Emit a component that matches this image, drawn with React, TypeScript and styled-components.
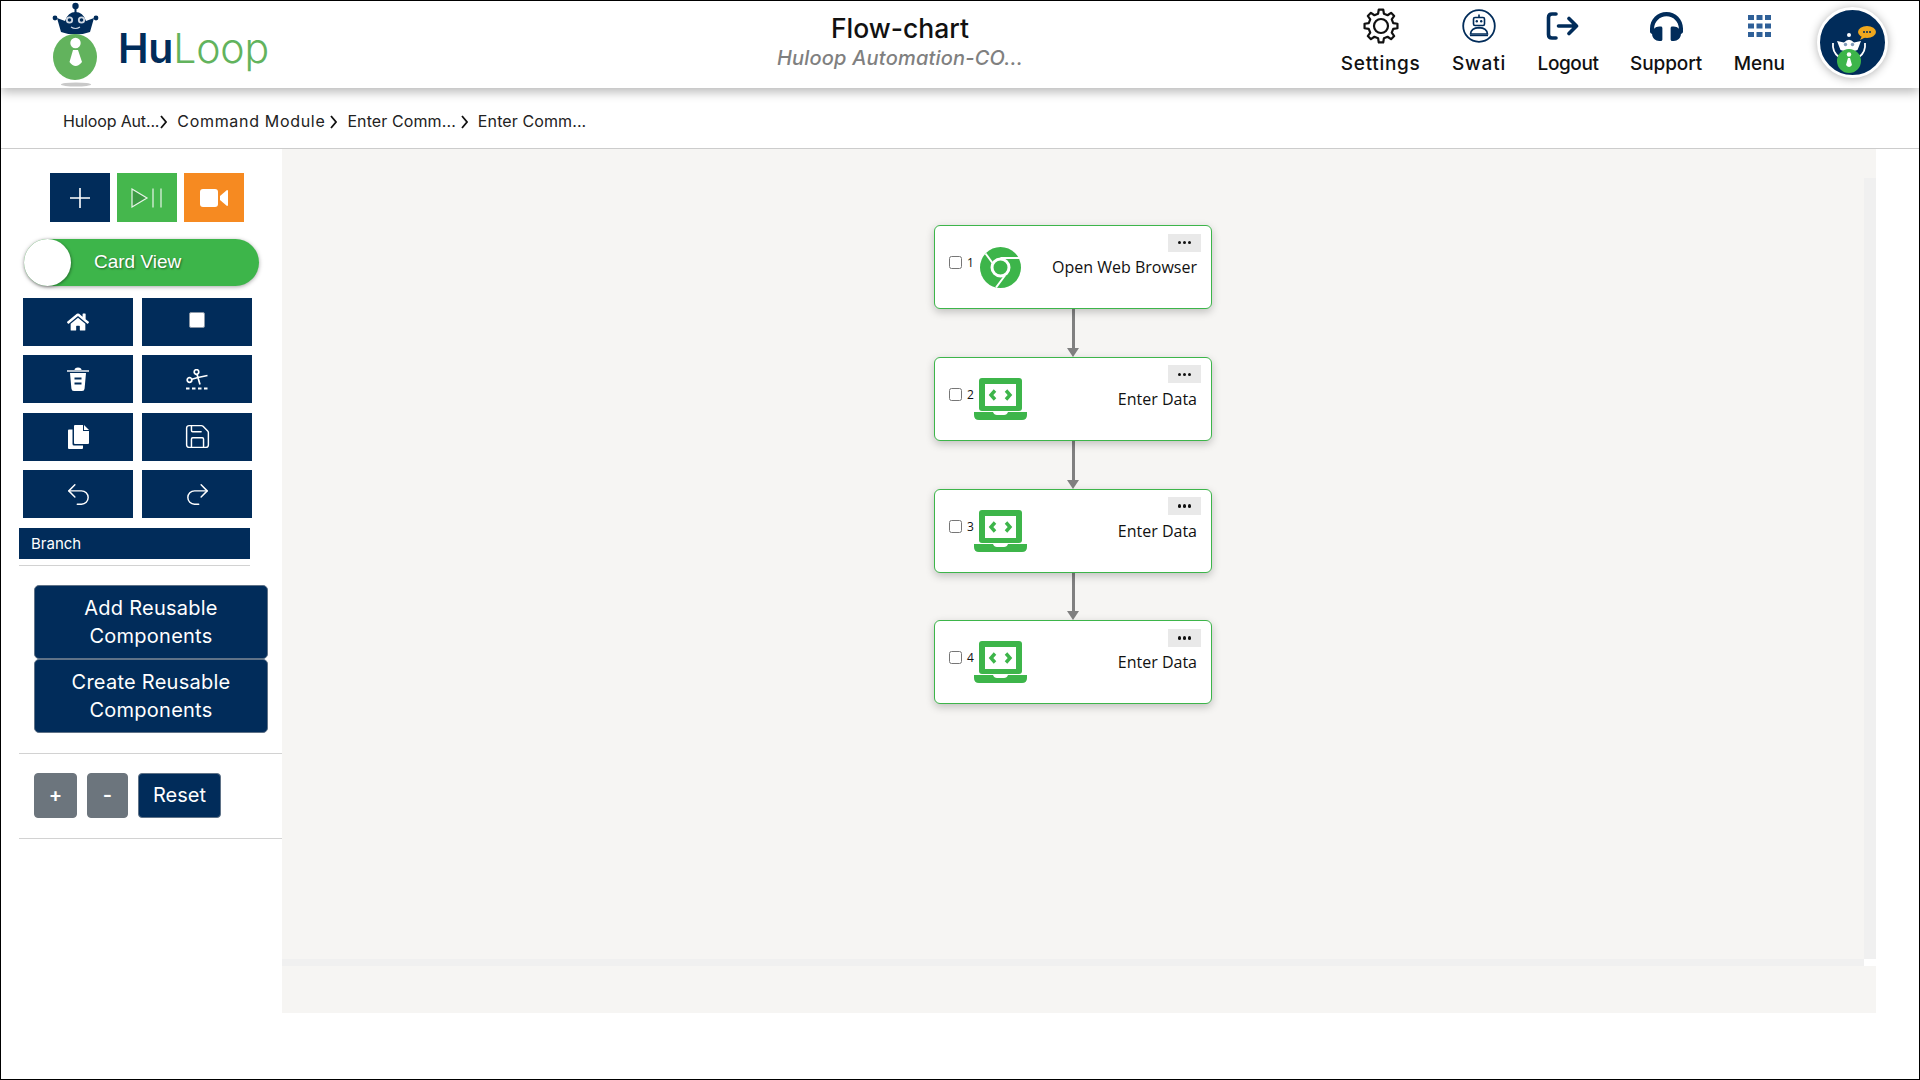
import React from "react";
import styled, { createGlobalStyle } from "styled-components";
import { FaHome, FaHeadphones } from "react-icons/fa";
import { Save, Undo2, Redo2 } from "lucide-react";

const navy = "#012c5a";
const green = "#3db54a";
const uiFont = `"Inter", "Noto Sans", sans-serif`;

const GlobalStyle = createGlobalStyle`
  html, body {
    margin: 0;
    padding: 0;
    background: #fff;
    font-family: ${uiFont};
  }
  * {
    box-sizing: border-box;
  }
`;

const Page = styled.div`
  width: 1920px;
  height: 1080px;
  border: 1px solid #000;
  background: #fff;
  display: flex;
  flex-direction: column;
  overflow: hidden;
`;

/* header */

const Header = styled.header`
  height: 87px;
  flex: none;
  display: flex;
  align-items: flex-start;
  background: #fff;
  box-shadow: 0 4px 10px rgba(0, 0, 0, 0.28);
  position: relative;
  z-index: 2;
`;

const LogoBlock = styled.div`
  width: 649px;
  height: 87px;
  display: flex;
  align-items: flex-start;
  padding-left: 45px;
`;

const LogoText = styled.div`
  margin: 21px 0 0 12px;
  font-size: 41px;
  line-height: 52px;
  letter-spacing: -0.2px;
  font-weight: 300;
  color: #62b35d;
  span {
    font-weight: 600;
    color: ${navy};
  }
`;

const TitleBlock = styled.div`
  width: 500px;
  padding-top: 11px;
  text-align: center;
`;

const Title = styled.div`
  font-size: 26.5px;
  line-height: 32px;
  font-weight: 500;
  color: #111;
`;

const SubTitle = styled.div`
  margin-top: 2px;
  font-size: 20px;
  line-height: 25px;
  font-style: italic;
  font-weight: 500;
  letter-spacing: 0.2px;
  color: #808080;
`;

const Nav = styled.nav`
  margin-left: auto;
  display: flex;
  align-items: flex-start;
  gap: 31.5px;
  padding: 8px 0 0;
`;

const NavItem = styled.div`
  display: flex;
  flex-direction: column;
  align-items: center;
`;

const NavIcon = styled.div<{ $shift?: number }>`
  height: 34px;
  margin-right: ${(p) => p.$shift ?? 0}px;
  display: flex;
  align-items: center;
  justify-content: center;
  color: ${navy};
`;

const NavLabel = styled.div<{ $spacing: number }>`
  margin-top: 9px;
  font-size: 19px;
  line-height: 24px;
  font-weight: 500;
  letter-spacing: ${(p) => p.$spacing}px;
  color: #111;
`;

const Avatar = styled.div`
  width: 71px;
  height: 71px;
  margin: 6px 31px 0 32px;
  border-radius: 50%;
  border: 3px solid #fff;
  background: ${navy};
  box-shadow: 0 1px 10px rgba(0, 0, 0, 0.3);
  display: flex;
  align-items: center;
  justify-content: center;
`;

/* breadcrumb */

const Crumbs = styled.div`
  height: 61px;
  flex: none;
  display: flex;
  align-items: center;
  padding: 6px 0 0 62px;
  border-bottom: 1px solid #ccc;
  font-size: 16px;
  color: #222;
`;

const Crumb = styled.span<{ $spacing: number }>`
  display: inline-block;
  letter-spacing: ${(p) => p.$spacing}px;
`;

const ChevronMark = styled.svg<{ $gap: number }>`
  margin: 2px 10px 0 ${(p) => p.$gap}px;
  flex: none;
`;

/* body */

const Body = styled.div`
  flex: 1;
  display: flex;
  min-height: 0;
`;

const Sidebar = styled.aside`
  width: 281px;
  flex: none;
  padding: 24px 0 0 18px;
  display: flex;
  flex-direction: column;
  align-items: flex-start;
`;

const TopTools = styled.div`
  margin-left: 31px;
  display: flex;
  gap: 7px;
`;

const TopTool = styled.div<{ $bg: string }>`
  width: 60px;
  height: 49px;
  background: ${(p) => p.$bg};
  display: flex;
  align-items: center;
  justify-content: center;
`;

const Toggle = styled.div`
  width: 235px;
  height: 47px;
  margin: 17px 0 0 5px;
  border-radius: 24px;
  background: ${green};
  box-shadow: 0 1px 4px rgba(0, 0, 0, 0.35);
  display: flex;
  align-items: center;
`;

const Knob = styled.div`
  width: 47px;
  height: 47px;
  border-radius: 50%;
  background: #fff;
  box-shadow: 1px 1px 3px rgba(0, 0, 0, 0.35);
`;

const ToggleLabel = styled.div`
  margin: 0 0 2px 23px;
  font-family: "Liberation Sans", Arial, sans-serif;
  font-size: 19px;
  color: #fff;
  text-shadow: 1px 1px 2px rgba(0, 0, 0, 0.45);
`;

const ToolGrid = styled.div`
  margin: 12px 0 0 4px;
  display: grid;
  grid-template-columns: 110px 110px;
  grid-auto-rows: 48px;
  column-gap: 9px;
  row-gap: 9.4px;
`;

const Tool = styled.div`
  background: ${navy};
  color: #fff;
  display: flex;
  align-items: center;
  justify-content: center;
`;

const StopMark = styled.span`
  width: 16px;
  height: 16px;
  margin-bottom: 4px;
  border-radius: 2px;
  background: #fff;
  border: 1px solid #8b97a6;
`;

const BranchBar = styled.div`
  width: 231px;
  height: 31px;
  margin-top: 10px;
  padding-left: 12px;
  background: ${navy};
  color: #fff;
  font-size: 15px;
  line-height: 31px;
`;

const Rule = styled.div<{ $width: number; $top: number }>`
  width: ${(p) => p.$width}px;
  height: 1px;
  margin-top: ${(p) => p.$top}px;
  background: #d2d2d2;
`;

const ReuseGroup = styled.div`
  margin: 19px 0 0 15px;
  display: flex;
  flex-direction: column;
`;

const ReuseButton = styled.div`
  width: 234px;
  height: 74px;
  padding: 8px 6px;
  border: 1px solid #5f7287;
  border-radius: 5px;
  background: ${navy};
  color: #fff;
  font-size: 20px;
  line-height: 28px;
  letter-spacing: 0.25px;
  text-align: center;
`;

const ZoomRow = styled.div`
  margin: 19px 0 0 15px;
  display: flex;
  gap: 10px;
`;

const ZoomButton = styled.div<{ $width: number; $dark?: boolean }>`
  width: ${(p) => p.$width}px;
  height: 45px;
  padding-bottom: 2px;
  border-radius: 4px;
  border: 1px solid ${(p) => (p.$dark ? "#5f7287" : "#6c757d")};
  background: ${(p) => (p.$dark ? navy : "#6c757d")};
  color: #fff;
  font-size: 20px;
  font-weight: ${(p) => (p.$dark ? 400 : 600)};
  display: flex;
  align-items: center;
  justify-content: center;
`;

/* canvas */

const Canvas = styled.main`
  width: 1594px;
  height: 864px;
  flex: none;
  display: flex;
  flex-direction: column;
  background: #f6f5f3;
`;

const ViewRow = styled.div`
  height: 810px;
  flex: none;
  display: flex;
`;

const FlowArea = styled.div`
  flex: 1;
  padding: 76px 0 0 652px;
`;

const VTrack = styled.div`
  width: 12px;
  margin-top: 29px;
  background: #f0f0f0;
`;

const HTrackRow = styled.div`
  height: 7px;
  flex: none;
  display: flex;
  background: #fff;
`;

const HTrack = styled.div`
  flex: 1;
  background: #f0f0f0;
`;

const HTrackEnd = styled.div`
  width: 12px;
`;

const Card = styled.div`
  position: relative;
  width: 278px;
  height: 84px;
  padding: 0 14px;
  border: 1.5px solid ${green};
  border-radius: 6px;
  background: #fff;
  box-shadow: 0 3px 8px rgba(0, 0, 0, 0.22);
  display: flex;
  align-items: center;
  font-family: "Open Sans", "Noto Sans", sans-serif;
`;

const CheckGroup = styled.label`
  display: flex;
  align-items: center;
  margin-bottom: 9px;
  font-size: 12px;
  color: #111;
`;

const Check = styled.input`
  width: 13px;
  height: 13px;
  margin: 0 5px 0 0;
`;

const StepNo = styled.span`
  width: 7px;
`;

const CardIcon = styled.div`
  width: 53px;
  display: flex;
  justify-content: center;
`;

const CardName = styled.div`
  margin-left: auto;
  font-size: 16px;
  color: #111;
`;

const DotsButton = styled.div`
  position: absolute;
  top: 7.5px;
  right: 10px;
  width: 33px;
  height: 18px;
  background: #e9e9e9;
  display: flex;
  align-items: center;
  justify-content: center;
  gap: 1.5px;
`;

const Dot = styled.span`
  width: 3.5px;
  height: 3.5px;
  border-radius: 50%;
  background: #111;
`;

const Connector = styled.div`
  width: 278px;
  height: 47.8px;
  display: flex;
  flex-direction: column;
  align-items: center;
`;

const ConnectorLine = styled.div`
  flex: 1;
  width: 3px;
  background: #808080;
`;

const ConnectorHead = styled.div`
  width: 0;
  height: 0;
  border-left: 6px solid transparent;
  border-right: 6px solid transparent;
  border-top: 9px solid #808080;
`;

const CanvasFoot = styled.div`
  height: 47px;
  flex: none;
`;

/* drawings */

const gearPath = () => {
  const parts: string[] = [];
  const cx = 18;
  const cy = 18;
  const teeth = 8;
  for (let i = 0; i < teeth; i++) {
    const a = (i * Math.PI * 2) / teeth - Math.PI / 2;
    const step = (Math.PI * 2) / teeth;
    const pts: [number, number][] = [
      [12.6, a - step * 0.3],
      [16.6, a - step * 0.17],
      [16.6, a + step * 0.17],
      [12.6, a + step * 0.3],
    ];
    pts.forEach(([r, t], k) => {
      const x = (cx + r * Math.cos(t)).toFixed(2);
      const y = (cy + r * Math.sin(t)).toFixed(2);
      parts.push(`${i === 0 && k === 0 ? "M" : "L"}${x} ${y}`);
    });
  }
  return parts.join(" ") + " Z";
};

const LogoMark = () => (
  <svg width="60" height="88" viewBox="46 0 60 88">
    <circle cx="75.5" cy="5" r="3.2" fill={navy} />
    <rect x="74.5" y="6" width="2" height="7" fill={navy} />
    <circle cx="55" cy="17" r="2.4" fill={navy} />
    <circle cx="96" cy="17" r="2.4" fill={navy} />
    <path d="M57 17 L65 20 Q68 11 75.5 11 Q83 11 86 20 L94 17 L90 31 Q75.5 36 61 31 Z" fill={navy} />
    <circle cx="69.5" cy="19" r="3.6" fill="#cfd8e3" />
    <circle cx="81.5" cy="19" r="3.6" fill="#cfd8e3" />
    <circle cx="69.5" cy="19" r="1.8" fill={navy} />
    <circle cx="81.5" cy="19" r="1.8" fill={navy} />
    <path d="M71 26 Q75.5 29 80 26" stroke="#cfd8e3" strokeWidth="1.2" fill="none" />
    <ellipse cx="75" cy="56" rx="22" ry="23" fill="#62b35d" />
    <circle cx="75.5" cy="42" r="5.2" fill="#fff" />
    <path d="M73 49 H78 L82 61 Q75.5 69 69.5 61 Z" fill="#fff" />
    <ellipse cx="76" cy="83.5" rx="15" ry="2" fill="#c9c9c9" />
  </svg>
);

const GearIcon = () => (
  <svg width="36" height="36" viewBox="0 0 36 36" fill="none" stroke="#111" strokeWidth="2.2" strokeLinejoin="round">
    <path d={gearPath()} />
    <circle cx="18" cy="18" r="7" />
  </svg>
);

const SwatiIcon = () => (
  <svg width="34" height="34" viewBox="0 0 34 34" fill="none" stroke={navy}>
    <circle cx="17" cy="17" r="15.8" strokeWidth="1.8" />
    <path d="M17 5.5 V8" strokeWidth="1.6" />
    <rect x="11.5" y="8.5" width="11" height="8" rx="1.5" strokeWidth="1.6" />
    <circle cx="14.8" cy="12.2" r="1.2" fill={navy} stroke="none" />
    <circle cx="19.2" cy="12.2" r="1.2" fill={navy} stroke="none" />
    <path d="M8.5 25 Q9 19 17 18.6 Q25 19 25.5 25 Z" strokeWidth="1.6" />
    <path d="M8 26.5 H26" strokeWidth="1.4" />
  </svg>
);

const LogoutIcon = () => (
  <svg width="33" height="28" viewBox="0 0 33 28" fill="none" stroke={navy} strokeWidth="3.6" strokeLinecap="round" strokeLinejoin="round">
    <path d="M10 2 H6 Q2.5 2 2.5 5.5 V22.5 Q2.5 26 6 26 H10" />
    <path d="M12.5 14 H30 M23 6.5 L30.5 14 L23 21.5" />
  </svg>
);

const MenuIcon = () => (
  <svg width="23" height="22" viewBox="0 0 23 22" fill="#2f6098">
    {[0, 8.5, 17].map((y) =>
      [0, 8.5, 17].map((x) => <rect key={`${x}-${y}`} x={x} y={y} width="6" height="5" />)
    )}
  </svg>
);

const AvatarMark = () => (
  <svg width="65" height="65" viewBox="0 0 65 65">
    <ellipse cx="47" cy="22" rx="9" ry="6" fill="#f0a81e" />
    <path d="M42 26 L40 30 L46 27 Z" fill="#f0a81e" />
    <circle cx="44" cy="22" r="1" fill={navy} />
    <circle cx="47" cy="22" r="1" fill={navy} />
    <circle cx="50" cy="22" r="1" fill={navy} />
    <circle cx="29" cy="25" r="2" fill="#fff" />
    <path d="M17 31 L24 32.5 Q29 27 34 32.5 L41 31 L37.5 40 Q29 43 20.5 40 Z" fill="#fff" />
    <circle cx="25.5" cy="34.5" r="1.7" fill="#7f9ab8" />
    <circle cx="32.5" cy="34.5" r="1.7" fill="#7f9ab8" />
    <path d="M13 33 Q12 42 19 47 M45 33 Q46 42 39 47" stroke="#fff" strokeWidth="1.8" fill="none" />
    <circle cx="29" cy="51" r="12" fill={green} />
    <circle cx="29" cy="44.5" r="2.2" fill="#fff" />
    <path d="M28 48 H30 L32 55 Q29 59 26 55 Z" fill="#fff" />
  </svg>
);

const Chevron = ({ gap }: { gap: number }) => (
  <ChevronMark $gap={gap} width="7" height="14" viewBox="0 0 7 14" fill="none" stroke="#111" strokeWidth="1.8">
    <path d="M1 1 L6 7 L1 13" />
  </ChevronMark>
);

const PlayPauseIcon = () => (
  <svg width="32" height="20" viewBox="0 0 32 20" stroke="#e8f5e9" strokeWidth="1.2">
    <path d="M1 1 L16 10 L1 19 Z" fill="#3d9a45" />
    <path d="M22 0.5 V19.5 M30 0.5 V19.5" fill="none" />
  </svg>
);

const PlusIcon = () => (
  <svg width="20" height="20" viewBox="0 0 20 20" stroke="#fff" strokeWidth="1.6">
    <path d="M10 0 V20 M0 10 H20" />
  </svg>
);

const VideoIcon = () => (
  <svg width="28" height="18" viewBox="0 0 28 18" fill="#fff">
    <rect x="0" y="0" width="18" height="18" rx="3" />
    <path d="M20 7 L27 1 Q28 1 28 2 V16 Q28 17 27 17 L20 11 Z" />
  </svg>
);

const TrashIcon = () => (
  <svg width="22" height="24" viewBox="0 0 22 24">
    <path d="M7.5 3 Q7.5 0.5 11 0.5 Q14.5 0.5 14.5 3 Z" fill="#fff" />
    <path d="M0 4 H22" stroke="#fff" strokeWidth="1.4" />
    <path d="M3 6 H19 L17.6 21.5 Q17.4 24 15 24 H7 Q4.6 24 4.4 21.5 Z" fill="#fff" />
    <path d="M7.5 11.5 H14.5 M7.5 16.5 H14.5" stroke={navy} strokeWidth="2" />
  </svg>
);

const CutIcon = () => (
  <svg width="23" height="21" viewBox="0 0 23 21" fill="none" stroke="#fff" strokeWidth="1.7">
    <circle cx="10.5" cy="3" r="2.3" />
    <circle cx="3.5" cy="11" r="2.3" />
    <path d="M5.8 10.2 L12 8.5 L21.5 6.5 M11 5.2 L14 15.5" />
    <path d="M0 19.5 H22" strokeWidth="1.8" strokeDasharray="3.5 2.5" />
  </svg>
);

const CopyIcon = () => (
  <svg width="21" height="24" viewBox="0 0 21 24" fill="#fff">
    <path d="M7 0 H15 V6 H21 V18 Q21 19 20 19 H7 Q6 19 6 18 V1 Q6 0 7 0 Z" />
    <path d="M16 0 L21 5 H16 Z" />
    <path d="M0 5.5 Q0 4.5 1 4.5 H4.5 V19 Q4.5 20.5 6 20.5 H15 V23 Q15 24 14 24 H1 Q0 24 0 23 Z" />
  </svg>
);

const ChromeIcon = () => (
  <svg width="41" height="41" viewBox="0 0 41 41">
    <circle cx="20.5" cy="20.5" r="20.5" fill={green} />
    <circle cx="20.5" cy="20.5" r="8.5" fill="none" stroke="#fff" strokeWidth="3" />
    <path d="M20.5 11 H39.5 M12.5 16 L5.5 6.5 M25 28.5 L16 40.5" stroke="#fff" strokeWidth="2" fill="none" />
  </svg>
);

const LaptopIcon = () => (
  <svg width="53" height="42" viewBox="0 0 53 42">
    <rect x="5" y="0" width="43" height="33" rx="3" fill={green} />
    <rect x="11" y="6" width="31" height="22" fill="#fff" />
    <path d="M21 12.5 L17 17 L21 21.5 M32 12.5 L36 17 L32 21.5" fill="none" stroke={green} strokeWidth="3.4" />
    <path d="M0 34 H19 Q20 37 23 37 H30 Q33 37 34 34 H53 V37 Q53 42 48 42 H5 Q0 42 0 37 Z" fill={green} />
  </svg>
);

const steps = [
  { no: 1, name: "Open Web Browser", icon: <ChromeIcon /> },
  { no: 2, name: "Enter Data", icon: <LaptopIcon /> },
  { no: 3, name: "Enter Data", icon: <LaptopIcon /> },
  { no: 4, name: "Enter Data", icon: <LaptopIcon /> },
];

const navItems = [
  { label: "Settings", spacing: 0.7, icon: <GearIcon /> },
  { label: "Swati", spacing: 0.8, icon: <SwatiIcon /> },
  { label: "Logout", spacing: -0.4, icon: <LogoutIcon />, shift: 12 },
  { label: "Support", spacing: -0.1, icon: <FaHeadphones size={33} color={navy} /> },
  { label: "Menu", spacing: 0, icon: <MenuIcon /> },
];

const crumbs = [
  { text: "Huloop Aut...", spacing: -0.15, gap: 1 },
  { text: "Command Module", spacing: 0.68, gap: 5 },
  { text: "Enter Comm...", spacing: 0.1, gap: 5 },
  { text: "Enter Comm...", spacing: 0.1, gap: 5 },
];

export default function App() {
  return (
    <>
      <GlobalStyle />
      <Page>
        <Header>
          <LogoBlock>
            <LogoMark />
            <LogoText>
              <span>Hu</span>Loop
            </LogoText>
          </LogoBlock>
          <TitleBlock>
            <Title>Flow-chart</Title>
            <SubTitle>Huloop Automation-CO...</SubTitle>
          </TitleBlock>
          <Nav>
            {navItems.map((item) => (
              <NavItem key={item.label}>
                <NavIcon $shift={item.shift}>{item.icon}</NavIcon>
                <NavLabel $spacing={item.spacing}>{item.label}</NavLabel>
              </NavItem>
            ))}
          </Nav>
          <Avatar>
            <AvatarMark />
          </Avatar>
        </Header>

        <Crumbs>
          {crumbs.map((c, i) => (
            <React.Fragment key={i}>
              <Crumb $spacing={c.spacing}>{c.text}</Crumb>
              {i < crumbs.length - 1 && <Chevron gap={c.gap} />}
            </React.Fragment>
          ))}
        </Crumbs>

        <Body>
          <Sidebar>
            <TopTools>
              <TopTool $bg={navy}>
                <PlusIcon />
              </TopTool>
              <TopTool $bg="#45b74d">
                <PlayPauseIcon />
              </TopTool>
              <TopTool $bg="#f68a21">
                <VideoIcon />
              </TopTool>
            </TopTools>
            <Toggle>
              <Knob />
              <ToggleLabel>Card View</ToggleLabel>
            </Toggle>
            <ToolGrid>
              <Tool>
                <FaHome size={22} />
              </Tool>
              <Tool>
                <StopMark />
              </Tool>
              <Tool>
                <TrashIcon />
              </Tool>
              <Tool>
                <CutIcon />
              </Tool>
              <Tool>
                <CopyIcon />
              </Tool>
              <Tool>
                <Save size={29} strokeWidth={1.2} />
              </Tool>
              <Tool>
                <Undo2 size={29} strokeWidth={1.2} />
              </Tool>
              <Tool>
                <Redo2 size={29} strokeWidth={1.2} />
              </Tool>
            </ToolGrid>
            <BranchBar>Branch</BranchBar>
            <Rule $width={231} $top={6} />
            <ReuseGroup>
              <ReuseButton>
                Add Reusable
                <br />
                Components
              </ReuseButton>
              <ReuseButton>
                Create Reusable
                <br />
                Components
              </ReuseButton>
            </ReuseGroup>
            <Rule $width={263} $top={20} />
            <ZoomRow>
              <ZoomButton $width={43}>+</ZoomButton>
              <ZoomButton $width={41}>-</ZoomButton>
              <ZoomButton $width={83} $dark>
                Reset
              </ZoomButton>
            </ZoomRow>
            <Rule $width={263} $top={20} />
          </Sidebar>

          <Canvas>
            <ViewRow>
              <FlowArea>
                {steps.map((s, i) => (
                  <React.Fragment key={s.no}>
                    <Card>
                      <CheckGroup>
                        <Check type="checkbox" />
                        <StepNo>{s.no}</StepNo>
                      </CheckGroup>
                      <CardIcon>{s.icon}</CardIcon>
                      <CardName>{s.name}</CardName>
                      <DotsButton>
                        <Dot />
                        <Dot />
                        <Dot />
                      </DotsButton>
                    </Card>
                    {i < steps.length - 1 && (
                      <Connector>
                        <ConnectorLine />
                        <ConnectorHead />
                      </Connector>
                    )}
                  </React.Fragment>
                ))}
              </FlowArea>
              <VTrack />
            </ViewRow>
            <HTrackRow>
              <HTrack />
              <HTrackEnd />
            </HTrackRow>
            <CanvasFoot />
          </Canvas>
        </Body>
      </Page>
    </>
  );
}
